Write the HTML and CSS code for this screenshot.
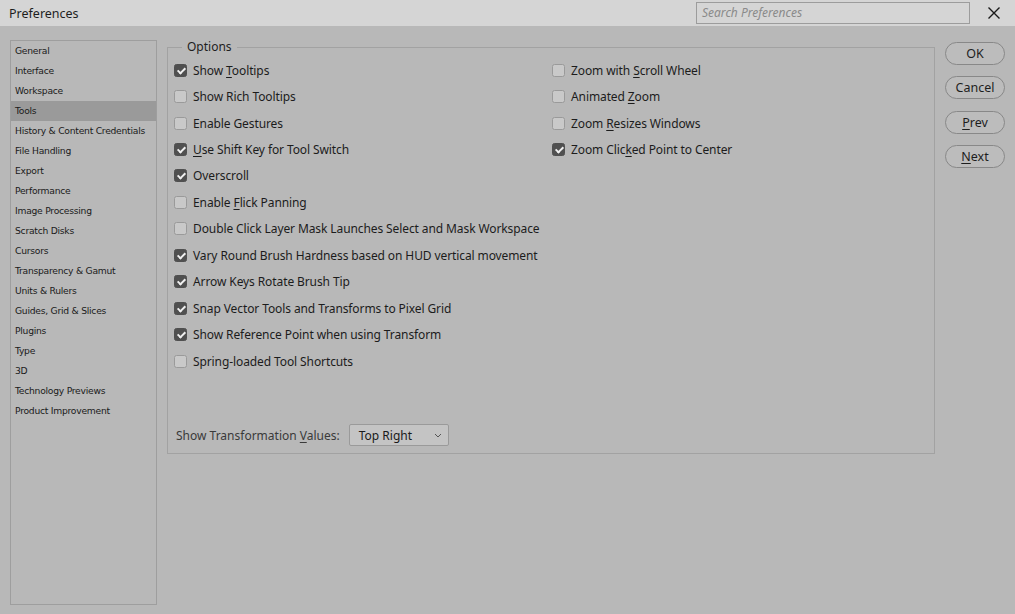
FILE: index.html
```html
<!DOCTYPE html>
<html>
<head>
<meta charset="utf-8">
<title>Preferences</title>
<link rel="stylesheet" href="styles.css">
</head>
<body>
<div class="window">
  <div class="titlebar">
    <div class="title">Preferences</div>
    <div class="search">Search Preferences</div>
    <div class="close">
      <svg width="14" height="14" viewBox="0 0 14 14"><path d="M1.5 1.5 L12.5 12.5 M12.5 1.5 L1.5 12.5" stroke="#1a1a1a" stroke-width="1.4" fill="none"/></svg>
    </div>
  </div>
  <div class="main">
    <ul class="nav">
      <li>General</li>
      <li>Interface</li>
      <li>Workspace</li>
      <li class="active">Tools</li>
      <li>History &amp; Content Credentials</li>
      <li>File Handling</li>
      <li>Export</li>
      <li>Performance</li>
      <li>Image Processing</li>
      <li>Scratch Disks</li>
      <li>Cursors</li>
      <li>Transparency &amp; Gamut</li>
      <li>Units &amp; Rulers</li>
      <li>Guides, Grid &amp; Slices</li>
      <li>Plugins</li>
      <li>Type</li>
      <li>3D</li>
      <li>Technology Previews</li>
      <li>Product Improvement</li>
    </ul>
    <div class="group">
      <span class="legend">Options</span>
      <div class="cols">
        <div class="col left">
          <div class="row"><span class="cb on"></span><span>Show <u>T</u>ooltips</span></div>
          <div class="row"><span class="cb"></span><span>Show Rich Tooltips</span></div>
          <div class="row"><span class="cb"></span><span>Enable Gestures</span></div>
          <div class="row"><span class="cb on"></span><span><u>U</u>se Shift Key for Tool Switch</span></div>
          <div class="row"><span class="cb on"></span><span>Overscroll</span></div>
          <div class="row"><span class="cb"></span><span>Enable <u>F</u>lick Panning</span></div>
          <div class="row"><span class="cb"></span><span>Double Click Layer Mask Launches Select and Mask Workspace</span></div>
          <div class="row"><span class="cb on"></span><span>Vary Round Brush Hardness based on HUD vertical movement</span></div>
          <div class="row"><span class="cb on"></span><span>Arrow Keys Rotate Brush Tip</span></div>
          <div class="row"><span class="cb on"></span><span>Snap Vector Tools and Transforms to Pixel Grid</span></div>
          <div class="row"><span class="cb on"></span><span>Show Reference Point when using Transform</span></div>
          <div class="row"><span class="cb"></span><span>Spring-loaded Tool Shortcuts</span></div>
        </div>
        <div class="col right">
          <div class="row"><span class="cb"></span><span>Zoom with <u>S</u>croll Wheel</span></div>
          <div class="row"><span class="cb"></span><span>Animated <u>Z</u>oom</span></div>
          <div class="row"><span class="cb"></span><span>Zoom <u>R</u>esizes Windows</span></div>
          <div class="row"><span class="cb on"></span><span>Zoom Clic<u>k</u>ed Point to Center</span></div>
        </div>
      </div>
      <div class="bottom">
        <span class="label">Show Transformation <u>V</u>alues:</span>
        <div class="select">
          <span>Top Right</span>
          <svg width="8" height="5" viewBox="0 0 8 5"><path d="M1 1 L4 4 L7 1" stroke="#555" stroke-width="1" fill="none"/></svg>
        </div>
      </div>
    </div>
    <div class="buttons">
      <div class="btn">OK</div>
      <div class="btn">Cancel</div>
      <div class="btn"><u>P</u>rev</div>
      <div class="btn"><u>N</u>ext</div>
    </div>
  </div>
</div>
</body>
</html>
```

FILE: styles.css
```css
* { box-sizing: border-box; }
html, body {
  margin: 0;
  padding: 0;
  width: 1015px;
  height: 614px;
  overflow: hidden;
  background: #b8b8b8;
  font-family: "Noto Sans", "Open Sans", sans-serif;
  color: #1c1c1c;
}
.window {
  display: flex;
  flex-direction: column;
  height: 614px;
}
.titlebar {
  height: 26px;
  background: #d5d5d5;
  display: flex;
  align-items: center;
  padding-left: 9px;
}
.title {
  font-size: 12.5px;
  flex: 1;
  color: #1e1e1e;
}
.search {
  width: 274px;
  height: 22px;
  margin-right: 1px;
  border: 1px solid #9c9c9c;
  font-size: 12px;
  font-style: italic;
  color: #8a8a8a;
  padding-left: 5px;
  line-height: 19px;
}
.close {
  width: 44px;
  display: flex;
  justify-content: center;
  align-items: center;
  padding-left: 1px;
}
.close svg { display: block; }
.main {
  flex: 1;
  display: flex;
  padding: 14px 10px 9px 10px;
  gap: 10px;
}
.nav {
  flex: none;
  list-style: none;
  margin: 0;
  padding: 0;
  width: 147px;
  border: 1px solid #9e9e9e;
  font-family: "DejaVu Sans", sans-serif;
  font-size: 9.2px;
  letter-spacing: -0.25px;
  color: #1a1a1a;
}
.nav li {
  height: 20px;
  line-height: 20px;
  padding-left: 4px;
  white-space: nowrap;
}
.nav li.active {
  background: #9a9a9a;
}
.group {
  flex: none;
  position: relative;
  width: 768px;
  height: 407px;
  margin-top: 7px;
  border: 1px solid #a2a2a2;
  display: flex;
  flex-direction: column;
  padding: 9px 0 7px 6px;
}
.legend {
  position: absolute;
  top: -9px;
  left: 14px;
  padding: 0 5px;
  background: #b8b8b8;
  font-size: 12px;
  line-height: 16px;
  color: #1e1e1e;
}
.cols {
  display: flex;
  flex: 1;
}
.col.left { width: 378px; }
.row {
  height: 26.45px;
  display: flex;
  align-items: center;
  font-size: 12px;
  white-space: nowrap;
  letter-spacing: -0.1px;
}
.cb {
  width: 13px;
  height: 13px;
  border-radius: 2.5px;
  border: 1px solid #9a9a9a;
  background: #c9c9c9;
  margin-right: 6px;
  flex: none;
  position: relative;
}
.cb.on {
  background: #505050;
  border-color: #505050;
}
.cb.on::after {
  content: "";
  position: absolute;
  left: 3.5px;
  top: 1px;
  width: 3px;
  height: 6px;
  border-right: 2px solid #f0f0f0;
  border-bottom: 2px solid #f0f0f0;
  transform: rotate(45deg);
}
u { text-decoration-thickness: 1px; text-underline-offset: 2px; }
.bottom {
  display: flex;
  align-items: center;
  padding-left: 2px;
}
.label {
  font-size: 12px;
  color: #3a3a3a;
  margin-right: 9px;
}
.select {
  width: 100px;
  height: 22px;
  border: 1px solid #9a9a9a;
  border-radius: 2px;
  background: #c4c4c4;
  display: flex;
  align-items: center;
  justify-content: space-between;
  padding: 0 6px 0 9px;
  font-size: 12px;
  color: #1a1a1a;
}
.select svg { display: block; }
.buttons {
  flex: none;
  display: flex;
  flex-direction: column;
  gap: 11.3px;
  padding-top: 2px;
}
.btn {
  width: 60px;
  height: 23px;
  border: 1px solid #888;
  border-radius: 12px;
  background: #bcbcbc;
  font-size: 12.5px;
  display: flex;
  align-items: center;
  justify-content: center;
  color: #1e1e1e;
}
```
